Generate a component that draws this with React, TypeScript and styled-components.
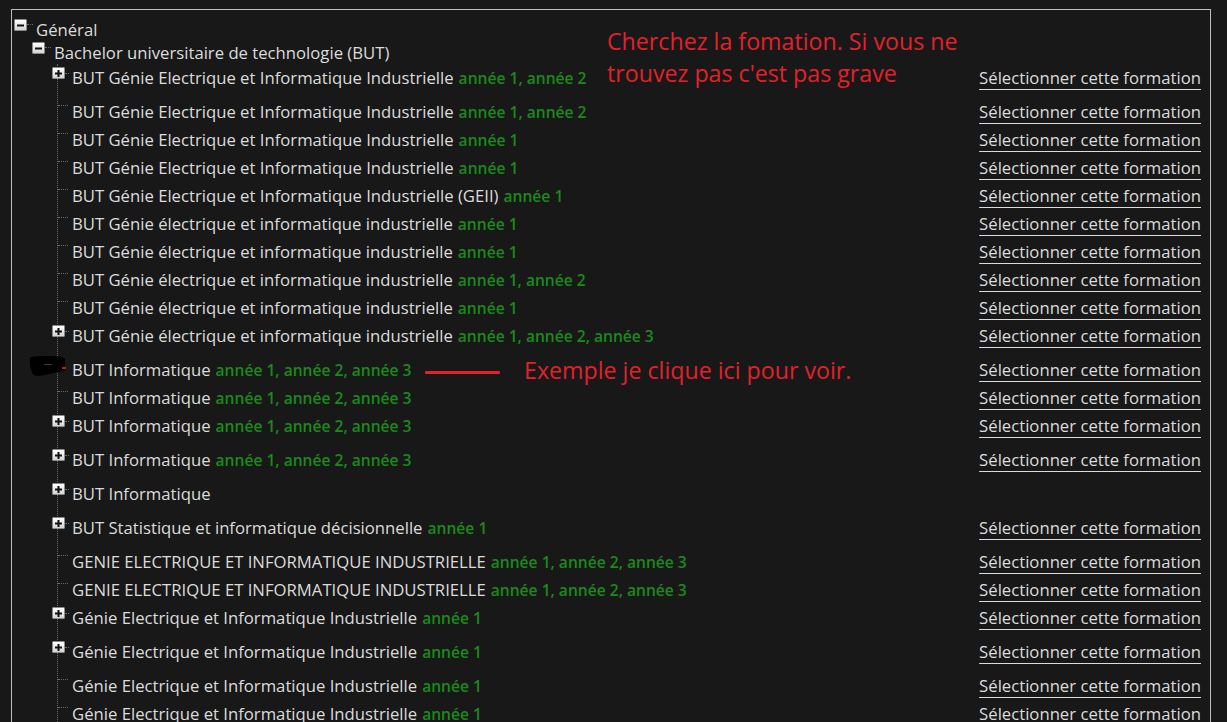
import React from "react";
import styled, { createGlobalStyle } from "styled-components";

const Global = createGlobalStyle`
  html, body { margin: 0; padding: 0; background: #181818; }
  body { font-family: "Open Sans", Lato, sans-serif; color: #dcdcdc; overflow: hidden; }
`;

const Frame = styled.div`
  position: relative;
  margin: 9px 16px 0 11px;
  border: 1px solid #bdbdbd;
  border-bottom: none;
  height: calc(100vh - 9px);
  overflow: hidden;
  padding: 6px 9px 0 2px;
  box-sizing: border-box;
  font-size: 16.7px;
`;

const Row = styled.div<{ $h: number }>`
  display: flex;
  align-items: flex-start;
  height: ${(p) => p.$h}px;
  line-height: 28px;
  white-space: nowrap;
`;

const Toggle = styled.span<{ $shift?: number }>`
  flex: none;
  width: 13px;
  height: 12px;
  margin-top: 3px;
  margin-left: ${(p) => p.$shift ?? 0}px;
  box-sizing: border-box;
  border: 1px solid #8a8a8a;
  border-radius: 1px;
  background: linear-gradient(#ffffff, #d4d4d4);
  display: flex;
  align-items: center;
  justify-content: center;
`;

const Glyph = styled.svg`
  display: block;
  flex: none;
`;

const Stub = styled.span<{ $w: number; $top: number }>`
  flex: none;
  width: ${(p) => p.$w}px;
  margin-top: ${(p) => p.$top}px;
  border-top: 1px dotted #6a6a6a;
`;

const Lead = styled.span<{ $w: number }>`
  flex: none;
  display: flex;
  align-items: flex-start;
  width: ${(p) => p.$w}px;
`;

const Label = styled.span`
  color: #dcdcdc;
`;

const Years = styled.span`
  color: #1b8a1b;
  font-weight: 600;
  font-size: 15.6px;
  margin-left: 5px;
`;

const Pick = styled.a`
  margin-left: auto;
  color: #dcdcdc;
  text-decoration: underline;
  text-decoration-thickness: 1px;
  text-underline-offset: 5px;
  cursor: pointer;
`;

const Children = styled.div`
  margin-left: 43px;
  border-left: 1px dotted #6a6a6a;
`;

const Note = styled.div<{ $x: number; $y: number }>`
  position: absolute;
  left: ${(p) => p.$x}px;
  top: ${(p) => p.$y}px;
  color: #e3212b;
  font-size: 23.2px;
  line-height: 32px;
  white-space: nowrap;
`;

const Stroke = styled.div`
  position: absolute;
  left: 413px;
  top: 361px;
  width: 75px;
  height: 3px;
  background: #e3212b;
  border-radius: 1px;
`;

const Minus = () => (
  <Glyph width="7" height="7" viewBox="0 0 7 7">
    <rect x="0" y="2.5" width="7" height="2" fill="#111" />
  </Glyph>
);
const Plus = () => (
  <Glyph width="7" height="7" viewBox="0 0 7 7">
    <rect x="0" y="2.5" width="7" height="2" fill="#111" />
    <rect x="2.5" y="0" width="2" height="7" fill="#111" />
  </Glyph>
);

const Blob = () => (
  <Glyph width="36" height="20" viewBox="0 0 36 20" style={{ marginLeft: -28 }}>
    <path d="M0 2 C2 0 10 0 20 0 C28 0 34 1 35 3 L35 13 C34 15 30 16 24 17 L10 20 C5 20 2 19 2 16 L0 10 Z" fill="#000" />
    <path d="M14 8.5 L22 8.5" stroke="#3c3c3c" strokeWidth="1" />
    <rect x="32" y="11" width="4" height="2" fill="#d0141c" />
  </Glyph>
);

type Item = {
  t: string;
  y?: string;
  kind?: "plus" | "blob";
  link?: boolean;
};

const EI = "BUT Génie Electrique et Informatique Industrielle";
const ei = "BUT Génie électrique et informatique industrielle";
const A12 = "année 1, année 2";
const A1 = "année 1";
const A123 = "année 1, année 2, année 3";
const GE = "Génie Electrique et Informatique Industrielle";
const GU = "GENIE ELECTRIQUE ET INFORMATIQUE INDUSTRIELLE";

const items: Item[] = [
  { t: EI, y: A12, kind: "plus", link: true },
  { t: EI, y: A12, link: true },
  { t: EI, y: A1, link: true },
  { t: EI, y: A1, link: true },
  { t: EI + " (GEII)", y: A1, link: true },
  { t: ei, y: A1, link: true },
  { t: ei, y: A1, link: true },
  { t: ei, y: A12, link: true },
  { t: ei, y: A1, link: true },
  { t: ei, y: A123, kind: "plus", link: true },
  { t: "BUT Informatique", y: A123, kind: "blob", link: true },
  { t: "BUT Informatique", y: A123, link: true },
  { t: "BUT Informatique", y: A123, kind: "plus", link: true },
  { t: "BUT Informatique", y: A123, kind: "plus", link: true },
  { t: "BUT Informatique", kind: "plus" },
  { t: "BUT Statistique et informatique décisionnelle", y: A1, kind: "plus", link: true },
  { t: GU, y: A123, link: true },
  { t: GU, y: A123, link: true },
  { t: GE, y: A1, kind: "plus", link: true },
  { t: GE, y: A1, kind: "plus", link: true },
  { t: GE, y: A1, link: true },
  { t: GE, y: A1, link: true },
];

const LeafRow = ({ it }: { it: Item }) => (
  <Row $h={it.kind === "plus" ? 34 : 28}>
    <Lead $w={14}>
      {it.kind === "plus" ? (
        <>
          <Toggle $shift={-6}>
            <Plus />
          </Toggle>
          <Stub $w={4} $top={9} />
        </>
      ) : it.kind === "blob" ? (
        <Blob />
      ) : (
        <Stub $w={10} $top={7} />
      )}
    </Lead>
    <Label>{it.t}</Label>
    {it.y && <Years>{it.y}</Years>}
    {it.link && <Pick>Sélectionner cette formation</Pick>}
  </Row>
);

export default function App() {
  return (
    <>
      <Global />
      <Frame>
        <Row $h={23}>
          <Toggle>
            <Minus />
          </Toggle>
          <Stub $w={6} $top={8} />
          <Label style={{ marginLeft: 3 }}>Général</Label>
        </Row>
        <Row $h={25} style={{ paddingLeft: 18 }}>
          <Toggle>
            <Minus />
          </Toggle>
          <Stub $w={6} $top={8} />
          <Label style={{ marginLeft: 3 }}>Bachelor universitaire de technologie (BUT)</Label>
        </Row>
        <Children>
          {items.map((it, i) => (
            <LeafRow key={i} it={it} />
          ))}
        </Children>
        <Note $x={595} $y={15}>
          Cherchez la fomation. Si vous ne
          <br />
          trouvez pas c'est pas grave
        </Note>
        <Stroke />
        <Note $x={512} $y={344}>
          Exemple je clique ici pour voir.
        </Note>
      </Frame>
    </>
  );
}
